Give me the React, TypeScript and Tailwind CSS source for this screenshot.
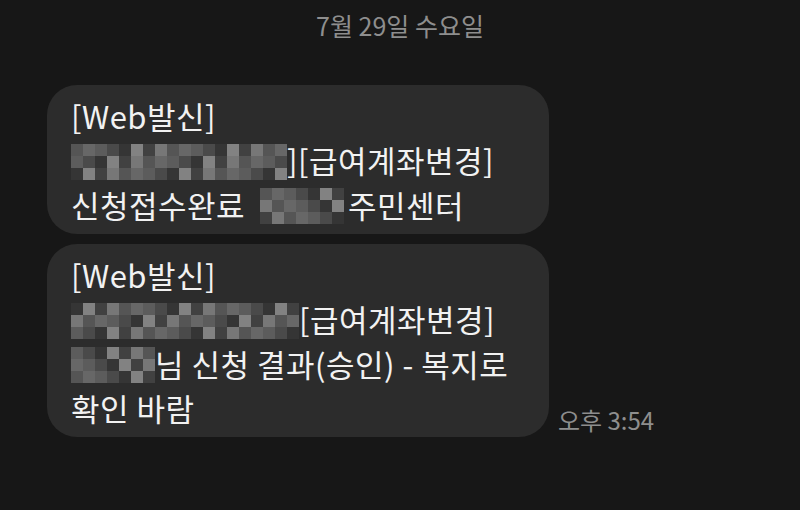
import React from 'react'

const shades = [
  'bg-[#5a5a5a]',
  'bg-[#6e6e6e]',
  'bg-[#444444]',
  'bg-[#808080]',
  'bg-[#363636]',
  'bg-[#8c8c8c]',
  'bg-[#626262]',
  'bg-[#4e4e4e]',
]

// pixelated block standing in for the blurred names
const Mosaic = ({ cols, rows = 3, seed = 1 }: { cols: number; rows?: number; seed?: number }) => {
  const cells = []
  let s = seed
  for (let i = 0; i < cols * rows; i++) {
    s = (s * 9301 + 49297) % 233280
    cells.push(shades[s % shades.length])
  }
  return (
    <span
      className="inline-grid align-middle -translate-y-[3px] opacity-90"
      style={{ gridTemplateColumns: `repeat(${cols}, 12px)` }}
    >
      {cells.map((c, i) => (
        <span key={i} className={`block w-[12px] h-[12px] ${c}`} />
      ))}
    </span>
  )
}

const Bubble = ({ children }: { children: React.ReactNode }) => (
  <div className="w-[502px] rounded-[30px] bg-[#2c2c2c] pl-[24px] pr-4 pt-[9px] pb-[7px] text-[31px] leading-[44px] tracking-[0.5px] text-[#f2f2f2]">
    {children}
  </div>
)

const App = () => {
  return (
    <div
      className="w-[800px] h-[510px] bg-[#171717] overflow-hidden"
      style={{ fontFamily: '"Noto Sans CJK KR", "Noto Sans", sans-serif' }}
    >
      <div className="pt-[7px] text-center text-[25px] leading-[36px] text-[#8e8e8e]">
        7월 29일 수요일
      </div>

      <div className="mt-[42px] pl-[47px] flex flex-col gap-[10px]">
        <Bubble>
          <div>[Web발신]</div>
          <div className="whitespace-nowrap">
            <Mosaic cols={18} seed={3} />
            <span>][급여계좌변경]</span>
          </div>
          <div className="whitespace-nowrap">
            신청접수완료&nbsp;&nbsp;<Mosaic cols={7} seed={11} />
            <span className="ml-[4px]">주민센터</span>
          </div>
        </Bubble>

        <div className="flex items-end gap-[9px]">
          <Bubble>
            <div>[Web발신]</div>
            <div className="whitespace-nowrap">
              <Mosaic cols={19} seed={7} />
              <span>[급여계좌변경]</span>
            </div>
            <div className="whitespace-nowrap">
              <Mosaic cols={7} seed={17} />
              <span>님 신청 결과(승인) - 복지로</span>
            </div>
            <div>확인 바람</div>
          </Bubble>
          <div className="pb-[2px] text-[24px] leading-[30px] text-[#8e8e8e] whitespace-nowrap">
            오후 3:54
          </div>
        </div>
      </div>
    </div>
  )
}

export default App
